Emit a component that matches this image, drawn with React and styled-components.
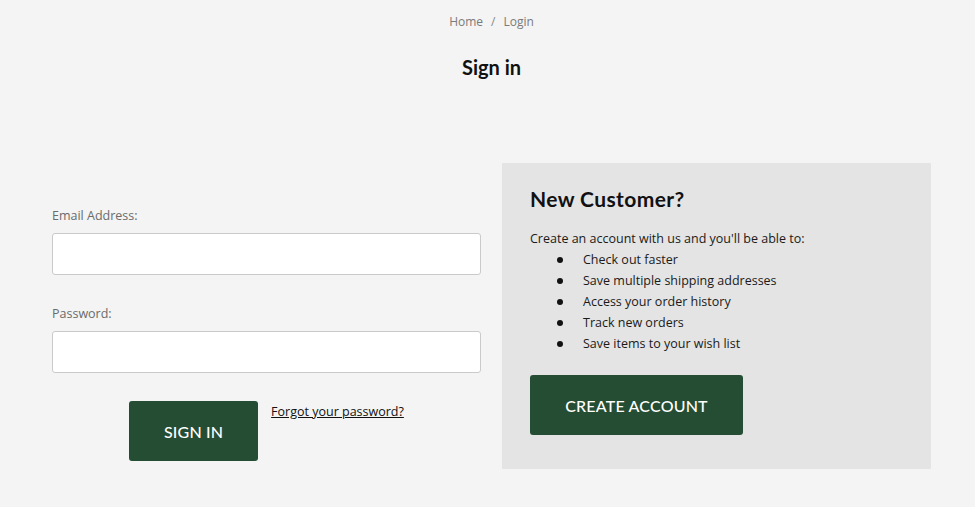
import styled, { createGlobalStyle } from "styled-components";

const GlobalStyle = createGlobalStyle`
  html, body {
    margin: 0;
    padding: 0;
    background: #f3f4f3;
  }
  body {
    font-family: "Lato", "Open Sans", sans-serif;
    color: #222;
  }
  * {
    box-sizing: border-box;
  }
`;

const benefits = [
  "Check out faster",
  "Save multiple shipping addresses",
  "Access your order history",
  "Track new orders",
  "Save items to your wish list",
];

export default function App() {
  return (
    <Page>
      <GlobalStyle />
      <Breadcrumb>
        <Crumb href="#">Home</Crumb>
        <Slash>/</Slash>
        <Crumb href="#">Login</Crumb>
      </Breadcrumb>
      <Title>Sign in</Title>
      <Columns>
        <LoginForm onSubmit={(e) => e.preventDefault()}>
          <Field>
            <Label htmlFor="email">Email Address:</Label>
            <Input id="email" type="email" />
          </Field>
          <Field>
            <Label htmlFor="password">Password:</Label>
            <Input id="password" type="password" />
          </Field>
          <Actions>
            <Button type="submit" $width={129}>
              SIGN IN
            </Button>
            <ForgotLink href="#">Forgot your password?</ForgotLink>
          </Actions>
        </LoginForm>
        <Panel>
          <PanelTitle>New Customer?</PanelTitle>
          <Intro>Create an account with us and you'll be able to:</Intro>
          <Benefits>
            {benefits.map((item) => (
              <li key={item}>{item}</li>
            ))}
          </Benefits>
          <Button type="button" $width={213}>
            CREATE ACCOUNT
          </Button>
        </Panel>
      </Columns>
    </Page>
  );
}

const Page = styled.div`
  width: 975px;
  min-height: 507px;
  padding: 13px 0 0 8px;
`;

const Breadcrumb = styled.nav`
  display: flex;
  justify-content: center;
  align-items: center;
  gap: 8px;
  font-family: "Open Sans", sans-serif;
  font-size: 12px;
  line-height: 17px;
  color: #7a7a7a;
`;

const Crumb = styled.a`
  color: inherit;
  text-decoration: none;
`;

const Slash = styled.span`
  color: #8a8a8a;
`;

const Title = styled.h1`
  margin: 25px 0 0;
  text-align: center;
  font-family: "Lato", sans-serif;
  font-weight: 700;
  font-size: 20px;
  line-height: 24px;
  color: #111;
`;

const Columns = styled.div`
  display: grid;
  grid-template-columns: 429px 429px;
  column-gap: 21px;
  margin-top: 84px;
  padding-left: 44px;
`;

const LoginForm = styled.form`
  display: flex;
  flex-direction: column;
  padding-top: 44px;
`;

const Field = styled.div`
  display: flex;
  flex-direction: column;
  margin-bottom: 30px;
`;

const Label = styled.label`
  font-family: "Open Sans", sans-serif;
  font-size: 12.5px;
  line-height: 17px;
  color: #6b6b6b;
  margin-bottom: 9px;
`;

const Input = styled.input`
  height: 42px;
  width: 100%;
  border: 1px solid #cacaca;
  border-radius: 3px;
  background: #fff;
  padding: 0 12px;
  font-size: 14px;
  outline: none;
`;

const Actions = styled.div`
  display: flex;
  justify-content: center;
  align-items: flex-start;
  gap: 13px;
  margin-top: -2px;
`;

const Button = styled.button`
  width: ${(p) => p.$width}px;
  height: 60px;
  border: none;
  border-radius: 3px;
  background: #254d33;
  color: #fff;
  font-family: "Lato", sans-serif;
  font-weight: 500;
  font-size: 16px;
  letter-spacing: 0.2px;
  cursor: pointer;
`;

const ForgotLink = styled.a`
  margin-top: 2px;
  font-family: "Open Sans", sans-serif;
  font-size: 12.5px;
  line-height: 17px;
  color: #111;
  text-decoration: underline;
`;

const Panel = styled.section`
  background: #e4e4e4;
  padding: 23px 28px 34px;
`;

const PanelTitle = styled.h2`
  margin: 0 0 16px;
  font-family: "Lato", sans-serif;
  font-weight: 700;
  font-size: 21px;
  letter-spacing: 0.4px;
  line-height: 26px;
  color: #111;
`;

const Intro = styled.p`
  margin: 0;
  font-family: "Open Sans", sans-serif;
  font-size: 12.5px;
  line-height: 21px;
  color: #1a1a1a;
`;

const Benefits = styled.ul`
  margin: 0 0 21px;
  padding-left: 53px;
  font-family: "Open Sans", sans-serif;
  font-size: 12.5px;
  line-height: 21px;
  color: #1a1a1a;
  list-style: none;

  li {
    position: relative;
  }

  li::before {
    content: "";
    position: absolute;
    left: -26px;
    top: 8px;
    width: 6px;
    height: 6px;
    border-radius: 50%;
    background: #111;
  }
`;
